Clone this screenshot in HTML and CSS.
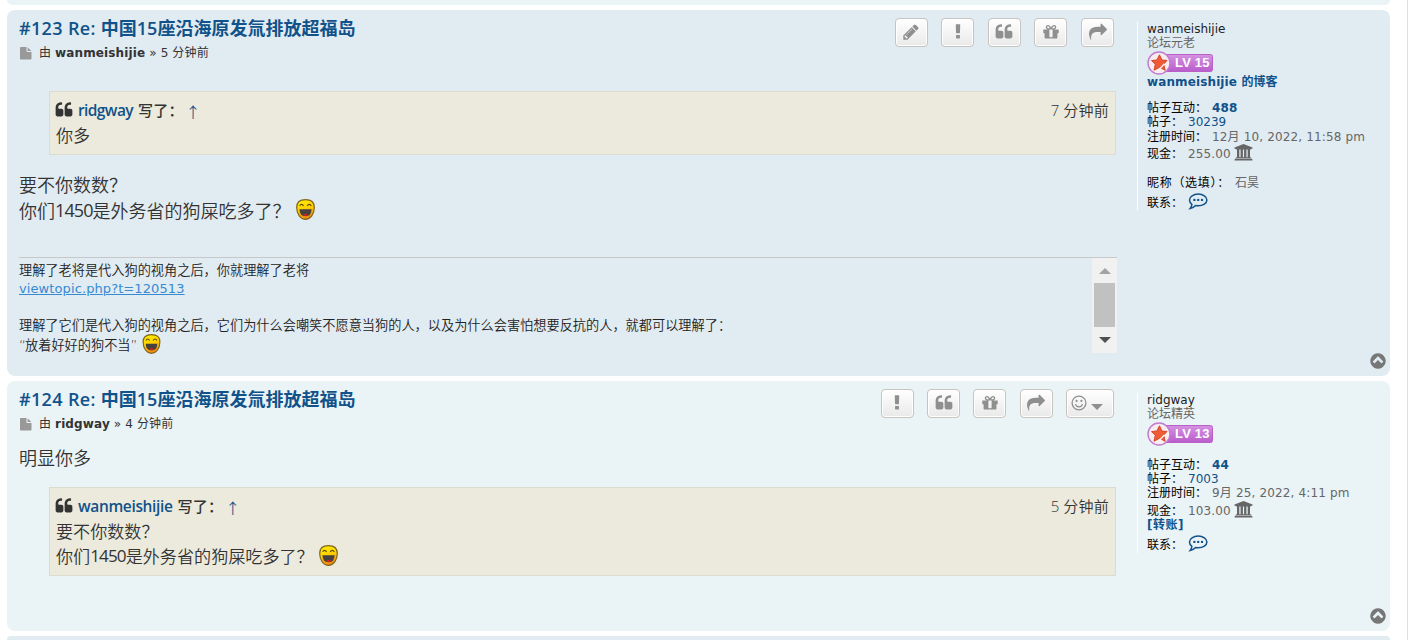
FILE: index.html
```html
<!DOCTYPE html>
<html lang="zh-CN">
<head>
<meta charset="utf-8">
<title>中国15座沿海原发氚排放超福岛</title>
<link rel="stylesheet" href="styles.css">
</head>
<body>
<svg class="defs" width="0" height="0" aria-hidden="true">
  <defs>
    <linearGradient id="face" x1="0" y1="0" x2="0.3" y2="1"><stop offset="0" stop-color="#fff200"/><stop offset=".55" stop-color="#ffd000"/><stop offset="1" stop-color="#f08a10"/></linearGradient>
    <linearGradient id="pill" x1="0" y1="0" x2="0" y2="1"><stop offset="0" stop-color="#d592e2"/><stop offset="1" stop-color="#b95cca"/></linearGradient>
    <symbol id="pencil" viewBox="0 0 1792 1792"><path d="M491 1536l91-91-235-235-91 91v107h128v128h107zm523-928q0-22-22-22-10 0-17 7l-542 542q-7 7-7 17 0 22 22 22 10 0 17-7l542-542q7-7 7-17zm-54-192l416 416-832 832h-416v-416zm683 96q0 53-37 90l-166 166-416-416 166-165q36-38 90-38 53 0 91 38l235 234q37 39 37 91z"/></symbol>
    <symbol id="bang" viewBox="0 0 1792 1792"><path d="M1088 1248v224q0 26-19 45t-45 19h-256q-26 0-45-19t-19-45v-224q0-26 19-45t45-19h256q26 0 45 19t19 45zm30-1056l-28 768q-1 26-20.5 45t-45.5 19h-256q-26 0-45.5-19t-20.5-45l-28-768q-1-26 17.5-45t44.5-19h320q26 0 44.5 19t17.5 45z"/></symbol>
    <symbol id="quote" viewBox="0 0 1792 1792"><path d="M832 960v384q0 80-56 136t-136 56h-384q-80 0-136-56t-56-136v-704q0-104 40.5-198.5t109.5-163.5 163.5-109.5 198.5-40.5h64q26 0 45 19t19 45v128q0 26-19 45t-45 19h-64q-106 0-181 75t-75 181v32q0 40 28 68t68 28h224q80 0 136 56t56 136zm896 0v384q0 80-56 136t-136 56h-384q-80 0-136-56t-56-136v-704q0-104 40.5-198.5t109.5-163.5 163.5-109.5 198.5-40.5h64q26 0 45 19t19 45v128q0 26-19 45t-45 19h-64q-106 0-181 75t-75 181v32q0 40 28 68t68 28h224q80 0 136 56t56 136z"/></symbol>
    <symbol id="gift" viewBox="0 0 1792 1792"><path d="M1056 1356v-716h-320v716q0 25 18 38.500t46 13.500h192q28 0 46-13.500t18-38.500zm-456-844h195l-126-161q-26-31-69-31-40 0-68 28t-28 68 28 68 68 28zm688-96q0-40-28-68t-68-28q-43 0-69 31l-125 161h194q40 0 68-28t28-68zm376 256v320q0 14-9 23t-23 9h-96v416q0 40-28 68t-68 28h-1088q-40 0-68-28t-28-68v-416h-96q-14 0-23-9t-9-23v-320q0-14 9-23t23-9h440q-93 0-158.500-65.500t-65.500-158.500 65.500-158.500 158.500-65.500q107 0 168 77l128 165 128-165q61-77 168-77 93 0 158.500 65.500t65.500 158.500-65.500 158.500-158.500 65.500h440q14 0 23 9t9 23z"/></symbol>
    <symbol id="share" viewBox="0 0 1792 1792"><path d="M1792 640q0 26-19 45l-512 512q-19 19-45 19t-45-19-19-45v-256h-224q-98 0-175.500 6t-154 21.500-133 42.500-105.500 69.500-80 101-48.500 138.500-17.500 181q0 55 5 123 0 6 2.500 23.500t2.500 26.500q0 15-8.500 25t-23.500 10q-16 0-28-17-7-9-13-22t-13.500-30-10.500-24q-127-285-127-451 0-199 53-333 162-403 875-403h224v-256q0-26 19-45t45-19 45 19l512 512q19 19 19 45z"/></symbol>
    <symbol id="top" viewBox="0 0 1792 1792"><path d="M1293 1101l102-102q19-19 19-45t-19-45l-454-454q-19-19-45-19t-45 19l-454 454q-19 19-19 45t19 45l102 102q19 19 45 19t45-19l307-307 307 307q19 19 45 19t45-19zm371-205q0 209-103 385.500t-279.500 279.500-385.500 103-385.500-103-279.500-279.500-103-385.500 103-385.500 279.500-279.500 385.500-103 385.500 103 279.500 279.500 103 385.500z"/></symbol>
    <symbol id="file" viewBox="0 0 12 13"><path d="M.8 0H6.500V4.300Q6.500 5 7.200 5H11.500V11.800Q11.500 12.600 10.700 12.600H.8Q0 12.600 0 11.800V.8Q0 0 .8 0ZM7.600.2L11.300 3.900H7.600Z"/></symbol>
    <symbol id="bank" viewBox="0 0 19 17"><path d="M9.500 0L18.500 3.600V4.800H17.300Q17.200 5.500 16.600 5.500H2.400Q1.800 5.500 1.700 4.800H.5V3.600ZM3 5H5.300V13.200H6.600V5H8.900V13.200H10.100V5H12.400V13.200H13.700V5H16V13.200H16.600Q17.300 13.200 17.300 14.300H1.700Q1.700 13.200 2.400 13.200H3ZM1.200 14.700H17.800Q18.500 15 18.500 16.500H.5Q.5 15 1.200 14.700Z"/></symbol>
    <symbol id="chat" viewBox="0 0 20 17"><path d="M10.200 1.100C15 1.100 18.900 3.600 18.900 6.900S15 12.700 10.200 12.700Q8.900 12.700 7.600 12.500Q5.400 14.900 2.200 15.400Q3.700 13.700 3.900 11.300Q1.500 9.600 1.500 6.900C1.500 3.600 5.400 1.100 10.200 1.100Z" fill="none" stroke="currentColor" stroke-width="1.500"/><circle cx="6.400" cy="6.900" r="1.200"/><circle cx="10.200" cy="6.900" r="1.200"/><circle cx="14" cy="6.900" r="1.200"/></symbol>
    <symbol id="smile" viewBox="0 0 16 16"><circle cx="8" cy="8" r="6.900" fill="none" stroke="currentColor" stroke-width="1.300"/><circle cx="5.600" cy="5.900" r="1.100"/><circle cx="10.400" cy="5.900" r="1.100"/><path d="M4.600 9.500Q5.500 11.900 8 11.900T11.400 9.500" fill="none" stroke="currentColor" stroke-width="1.200" stroke-linecap="round"/></symbol>
    <symbol id="laugh" viewBox="0 0 19 21"><path d="M9.500.7C15 .7 18.300 3 18.300 8.500C18.300 15 14.500 20.300 9.500 20.300S.7 15 .7 8.500C.7 3 4 .7 9.500 .7Z" fill="url(#face)" stroke="#80641c" stroke-width="1.200"/><path d="M3.600 6.800Q5.500 3.800 7.600 6.800M11.200 6.800Q13.300 3.800 15.300 6.800" fill="none" stroke="#5a4a10" stroke-width="1.200"/><path d="M3.400 10.300H15.600Q15.300 17.300 9.500 17.300T3.400 10.300Z" fill="#45413f"/><path d="M7 15.800Q9.500 14 12 15.800Q9.500 18 7 15.800Z" fill="#f01818"/></symbol>
    <symbol id="level" viewBox="0 0 67 24"><rect x="12.500" y="3.500" width="53" height="17" rx="2" fill="url(#pill)" stroke="#b85fc8"/><circle cx="12" cy="12" r="11" fill="#f8ecef" stroke="#c17bd0" stroke-width="1.400"/><path d="M12.500 3.800L15 9.100L20 9.400L16.700 13.300L18.200 19.300L12.600 16.300L7 19.200L8.300 13.200L4.500 9.600L9.900 8.900Z" fill="#f15a36" stroke="#cf3d20" stroke-width=".9"/><path d="M12.200 18.500L17.500 12.800" stroke="#fff0ec" stroke-width="1.400"/></symbol>
  </defs>
</svg>

<div class="page">
  <div class="post light before"></div>

  <article class="post first">
    <div class="postbody">
      <header class="head">
        <div>
          <h3 class="title"><span class="treb no">#123 Re: </span>中国<span class="treb">15</span>座沿海原发氚排放超福岛</h3>
          <p class="author"><svg class="file"><use href="#file"/></svg><span>由 <b class="name-a">wanmeishijie</b> » 5 分钟前</span></p>
        </div>
        <ul class="buttons">
          <li class="btn"><svg><use href="#pencil"/></svg></li>
          <li class="btn"><svg><use href="#bang"/></svg></li>
          <li class="btn"><svg><use href="#quote"/></svg></li>
          <li class="btn"><svg><use href="#gift"/></svg></li>
          <li class="btn"><svg><use href="#share"/></svg></li>
        </ul>
      </header>
      <blockquote class="quote one">
        <div class="cite"><svg class="qicon"><use href="#quote"/></svg><a class="treb who short">ridgway</a><b class="wrote">写了：</b><a class="arrow">↑</a><span class="when"><span class="treb">7</span> 分钟前</span></div>
        <p>你多</p>
      </blockquote>
      <div class="content">
        <p>要不你数数？</p>
        <p>你们<span class="treb num">1450</span>是外务省的狗屎吃多了？<svg class="laugh"><use href="#laugh"/></svg></p>
      </div>
      <div class="signature">
        <div class="sigtext">
          <p class="s1">理解了老将是代入狗的视角之后，你就理解了老将</p>
          <p class="s2"><a class="link">viewtopic.php?t=120513</a></p>
          <p class="s3">理解了它们是代入狗的视角之后，它们为什么会嘲笑不愿意当狗的人，以及为什么会害怕想要反抗的人，就都可以理解了：</p>
          <p class="s4"><span><span class="q">“</span>放着好好的狗不当<span class="q">”</span></span><svg class="laugh"><use href="#laugh"/></svg></p>
        </div>
        <div class="bar"><i class="up"></i><i class="thumb"></i><i class="down"></i></div>
      </div>
    </div>
    <aside class="profile">
      <p class="uname">wanmeishijie</p>
      <p class="rank">论坛元老</p>
      <div class="level"><svg><use href="#level"/></svg><span>LV 15</span></div>
      <p class="blog"><b>wanmeishijie 的博客</b></p>
      <p class="row gap12"><span>帖子互动：</span><b>488</b></p>
      <p class="row posts"><span>帖子：</span><a>30239</a></p>
      <p class="row"><span>注册时间：</span><i>12月 10, 2022, 11:58 pm</i></p>
      <p class="row cash"><span>现金：</span><i>255.00</i><svg class="bank"><use href="#bank"/></svg></p>
      <p class="row gap12"><span class="nick">昵称（选填）：</span><i>石昊</i></p>
      <p class="row contact"><span>联系：</span><svg class="chat"><use href="#chat"/></svg></p>
    </aside>
    <svg class="top"><use href="#top"/></svg>
  </article>

  <article class="post light second">
    <div class="postbody">
      <header class="head">
        <div>
          <h3 class="title"><span class="treb no">#124 Re: </span>中国<span class="treb">15</span>座沿海原发氚排放超福岛</h3>
          <p class="author"><svg class="file"><use href="#file"/></svg><span>由 <b>ridgway</b> » 4 分钟前</span></p>
        </div>
        <ul class="buttons">
          <li class="btn"><svg><use href="#bang"/></svg></li>
          <li class="btn"><svg><use href="#quote"/></svg></li>
          <li class="btn"><svg><use href="#gift"/></svg></li>
          <li class="btn"><svg><use href="#share"/></svg></li>
          <li class="btn wide"><svg><use href="#smile"/></svg><i class="caret"></i></li>
        </ul>
      </header>
      <div class="content">
        <p>明显你多</p>
      </div>
      <blockquote class="quote two">
        <div class="cite"><svg class="qicon"><use href="#quote"/></svg><a class="treb who">wanmeishijie</a><b class="wrote">写了：</b><a class="arrow">↑</a><span class="when"><span class="treb">5</span> 分钟前</span></div>
        <p>要不你数数？</p>
        <p>你们<span class="treb num">1450</span>是外务省的狗屎吃多了？<svg class="laugh"><use href="#laugh"/></svg></p>
      </blockquote>
    </div>
    <aside class="profile">
      <p class="uname">ridgway</p>
      <p class="rank">论坛精英</p>
      <div class="level"><svg><use href="#level"/></svg><span>LV 13</span></div>
      <p class="row gap11"><span>帖子互动：</span><b>44</b></p>
      <p class="row"><span>帖子：</span><a>7003</a></p>
      <p class="row"><span>注册时间：</span><i>9月 25, 2022, 4:11 pm</i></p>
      <p class="row cash low"><span>现金：</span><i>103.00</i><svg class="bank"><use href="#bank"/></svg></p>
      <p class="transfer"><b>[转账]</b></p>
      <p class="row contact"><span>联系：</span><svg class="chat"><use href="#chat"/></svg></p>
    </aside>
    <svg class="top"><use href="#top"/></svg>
  </article>

  <div class="post after"></div>
</div>
</body>
</html>
```

FILE: styles.css
```css
* { box-sizing: border-box; }
body, p, h3, ul, blockquote { margin: 0; padding: 0; }
body {
  height: 640px;
  overflow: hidden;
  background: #fff;
  font-family: "DejaVu Sans", "Noto Sans CJK SC", sans-serif;
  font-size: 12px;
  color: #333;
}
p, h3, span, b, a { white-space: pre; }
i { font-style: normal; }
svg { fill: currentColor; flex: none; display: block; }
.defs { position: absolute; }
.page {
  width: 1408px;
  height: 640px;
  padding: 0 17px 0 7px;
  border-right: 1px solid #dcdfe2;
  display: flex;
  flex-direction: column;
  gap: 5px;
}
.post {
  position: relative;
  flex: none;
  display: flex;
  background: #e1ebf2;
  border-radius: 8px;
  padding-left: 12px;
}
.light { background: #eaf3f6; }
.before { height: 5px; border-radius: 0 0 8px 8px; }
.after { height: 4px; border-radius: 8px 8px 0 0; }
.first { height: 366px; }
.second { height: 250px; }
.postbody { width: 1098px; }
.treb { font-family: "Open Sans", "Noto Sans", sans-serif; }

.head { display: flex; justify-content: space-between; height: 54px; padding-top: 8px; }
.title {
  margin-top: -2px;
  padding-bottom: 2px;
  font: bold 18px/22px "Noto Sans CJK SC", sans-serif;
  color: #105289;
}
.title .treb { font-weight: 600; }
.title .no { letter-spacing: .35px; }
.author { display: flex; align-items: center; height: 24px; line-height: 24px; letter-spacing: .13px; }
.file { width: 12px; height: 13px; margin: 0 7px 0 1px; color: #999; }
.buttons { list-style: none; display: flex; gap: 13.600px; padding-right: 3px; }
.second .buttons { gap: 13.300px; }
.btn {
  width: 33px;
  height: 29px;
  border: 1px solid #c7c3bf;
  border-radius: 4px;
  background: linear-gradient(#fff, #e9e9e9);
  box-shadow: inset 0 0 0 1px #fff;
  color: #8f8f8f;
  display: flex;
  align-items: center;
  justify-content: center;
}
.btn svg { width: 18px; height: 18px; margin-top: -1px; }
.wide { width: 48px; justify-content: flex-start; padding-left: 4px; }
.wide svg { width: 16px; height: 16px; }
.caret { border: 6px solid transparent; border-top-color: #8f8f8f; border-bottom: 0; margin: 6px 0 0 4px; }

.quote {
  margin-left: 30px;
  width: 1067px;
  background: #ebeadd;
  border: 1px solid #dbdbce;
  padding: 5px 6px 0;
  font: 350 17.100px/25px "Noto Sans CJK SC", sans-serif;
}
.one { height: 64px; margin-top: 27px; }
.two { height: 89px; margin-top: 17px; }
.quote p, .content p { display: flex; align-items: center; }
.cite { display: flex; align-items: center; height: 25px; font-size: 15px; }
.qicon { width: 18px; height: 18px; margin: 0 4px 0 -1px; }
.who { font-size: 15.500px; font-weight: 600; color: #105289; margin: 2px 5px 0 1px; letter-spacing: -.35px; }
.short { letter-spacing: -.6px; }
.wrote { font-weight: 500; letter-spacing: .2px; }
.arrow { color: #105289; margin: 4px 0 0 2px; }
.when { margin-left: auto; letter-spacing: .25px; }
.content { font: 350 18px/26px "Noto Sans CJK SC", sans-serif; }
.first .content { margin-top: 16px; }
.second .content { margin-top: 9px; }
.num { letter-spacing: -.9px; font-weight: 400; }
.laugh { width: 19px; height: 21px; margin: -1px 0 0 5px; }

.signature { display: flex; height: 96px; margin-top: 34px; border-top: 1px solid #c8c8cb; }
.sigtext { flex: 1; font: 350 13.200px/18px "Noto Sans CJK SC", sans-serif; color: #222; }
.s1 { margin-top: 3px; }
.s3 { margin-top: 18px; }
.s4 { display: flex; align-items: center; height: 23px; }
.s4 .laugh { margin: -4px 0 0 5px; height: 20px; }
.q { font-family: "DejaVu Sans", sans-serif; letter-spacing: -.8px; }
.link { font-family: "DejaVu Sans", sans-serif; font-size: 13px; letter-spacing: .1px; font-weight: 400; color: #368ad2; text-decoration: underline; }
.bar { width: 25px; background: #f1f1f1; display: flex; flex-direction: column; align-items: center; padding-top: 10px; }
.up { border: 6px solid transparent; border-top: 0; border-bottom-color: #a3a3a3; }
.thumb { width: 21px; height: 44px; margin: 9px 0 10px; background: #c1c1c1; }
.down { border: 6px solid transparent; border-bottom: 0; border-top-color: #505050; }

.profile {
  align-self: flex-start;
  margin: 12px 0 0 20px;
  width: 240px;
  height: 188px;
  border-left: 1px solid #fff;
  padding-left: 9px;
  color: #000;
}
.second .profile { height: 160px; }
.uname { height: 13px; line-height: 15px; color: #222; }
.rank { height: 16px; line-height: 17px; color: #666; }
.level { position: relative; height: 24px; }
.level svg { width: 67px; height: 24px; }
.level span { position: absolute; left: 28px; top: 4px; font: bold 13px/16px "Liberation Sans", sans-serif; letter-spacing: .2px; color: #fff; }
.blog, .transfer { height: 13px; line-height: 15px; color: #105289; letter-spacing: .12px; }
.row { display: flex; align-items: center; height: 14px; line-height: 14px; }
.row span, .row b, .row a, .row i { padding-top: 1px; }
.row span { margin-right: 5px; }
.row b, .row a { color: #105289; }
.row b { letter-spacing: .15px; }
.row i { color: #666; white-space: pre; letter-spacing: .15px; }
.row .nick { letter-spacing: .7px; }
.gap12 { margin-top: 12px; }
.gap11 { margin-top: 11px; }
.posts { height: 15px; }
.cash { height: 20px; }
.low { margin-top: 1px; }
.transfer { margin-top: -3px; height: 14px; line-height: 17px; letter-spacing: .5px; }
.contact { height: 16px; margin-top: 5px; }
.bank { width: 19px; height: 17px; margin: -2px 0 0 3px; color: #666; }
.chat { width: 20px; height: 17px; margin-top: -1px; color: #105289; }
.top { position: absolute; right: 3px; bottom: 6px; width: 18px; height: 18px; color: #777; }
```
